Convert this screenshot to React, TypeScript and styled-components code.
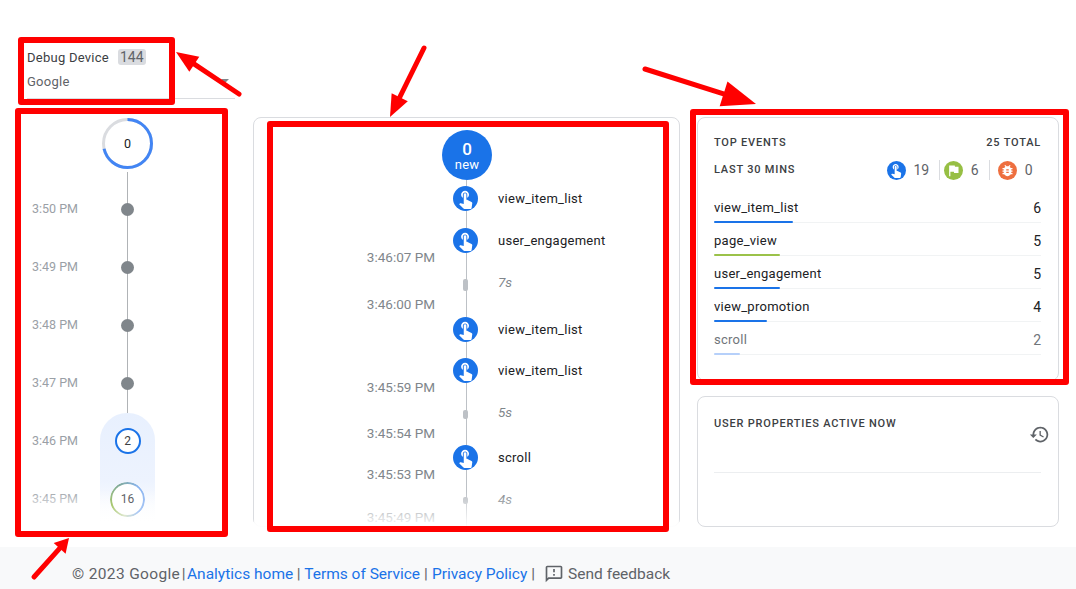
import React from "react";
import styled, { createGlobalStyle } from "styled-components";

const Global = createGlobalStyle`
  html, body { margin: 0; padding: 0; background: #fff; }
  body { font-family: Roboto, "Liberation Sans", sans-serif; color: #202124; }
`;

const Page = styled.div`
  position: relative;
  width: 1076px;
  height: 589px;
  overflow: hidden;
  display: flex;
  flex-direction: column;
`;
const Main = styled.main`
  flex: 1;
  display: flex;
  min-height: 0;
`;
const LeftColumn = styled.section`
  width: 253px;
  flex: none;
  padding-top: 45px;
  box-sizing: border-box;
`;
const Selector = styled.div`
  position: relative;
  width: 208px;
  height: 53px;
  margin: 0 0 19px 27px;
  border-bottom: 1px solid #dadce0;
  display: flex;
  flex-direction: column;
  gap: 0.5px;
`;
const SelectorLine = styled.div<{ $muted?: boolean }>`
  display: flex;
  align-items: center;
  gap: 9px;
  height: 24px;
  font-size: 13px;
  letter-spacing: 0.25px;
  color: ${(p) => (p.$muted ? "#5f6368" : "#3c4043")};
`;
const Badge = styled.span`
  background: #dadce0;
  border-radius: 3px;
  padding: 0 2px;
  font-size: 14px;
  line-height: 16px;
  letter-spacing: 0;
  color: #5f6368;
`;
const Caret = styled.span`
  position: absolute;
  right: 6px;
  top: 34px;
  width: 0;
  height: 0;
  border-left: 4px solid transparent;
  border-right: 4px solid transparent;
  border-top: 4px solid #80868b;
`;
const Rail = styled.div`
  position: relative;
  padding-left: 32px;
  &::before {
    content: "";
    position: absolute;
    left: 127px;
    top: 54px;
    height: 350px;
    width: 1px;
    background: #b0b3b6;
  }
  &::after {
    content: "";
    position: absolute;
    left: 28px;
    width: 130px;
    top: 372px;
    height: 36px;
    background: linear-gradient(to bottom, rgba(255,255,255,0), rgba(255,255,255,0.55) 40%, rgba(255,255,255,1) 90%);
  }
`;
const Pill = styled.div`
  position: absolute;
  left: 100px;
  top: 295px;
  width: 55px;
  height: 112px;
  border-radius: 27px 27px 0 0;
  background: linear-gradient(to bottom, #e8f0fe 0%, #edf3fe 60%, #ffffff 100%);
`;
const Gauge = styled.div`
  position: relative;
  width: 51px;
  height: 51px;
  margin: 0 0 11px 70px;
  display: flex;
  align-items: center;
  justify-content: center;
  font-size: 12.5px;
  background: #fff;
  & > svg { position: absolute; inset: 0; }
`;
const RailRow = styled.div`
  position: relative;
  height: 58px;
  display: grid;
  grid-template-columns: 68px 55px;
  align-items: center;
`;
const RailTime = styled.span`
  font-size: 12.5px;
  padding-bottom: 2px;
  color: #9aa0a6;
`;
const NodeSlot = styled.div`
  display: flex;
  align-items: center;
  justify-content: center;
  z-index: 1;
`;
const Dot = styled.span`
  width: 13px;
  height: 13px;
  border-radius: 50%;
  background: #80868b;
`;
const CountNode = styled.span`
  width: 26px;
  height: 26px;
  box-sizing: border-box;
  border: 2.5px solid #1a73e8;
  border-radius: 50%;
  background: #fff;
  display: flex;
  align-items: center;
  justify-content: center;
  font-size: 12px;
  color: #3c4043;
`;
const RingNode = styled.span`
  position: relative;
  width: 35px;
  height: 35px;
  border-radius: 50%;
  background: #fff;
  display: flex;
  align-items: center;
  justify-content: center;
  font-size: 12px;
  color: #5f6368;
  &::before {
    content: "";
    position: absolute;
    inset: 0;
    border-radius: 50%;
    padding: 2px;
    background: conic-gradient(from 330deg, #7fa99b, #8ab4f0 70deg, #a9c7f5 170deg, #dfe8d0 220deg, #a8c86e 280deg, #7fa99b);
    -webkit-mask: linear-gradient(#000 0 0) content-box, linear-gradient(#000 0 0);
    -webkit-mask-composite: xor;
    mask-composite: exclude;
  }
`;

const CenterCard = styled.section`
  position: relative;
  width: 427px;
  height: 410px;
  margin-top: 117px;
  flex: none;
  box-sizing: border-box;
  border: 1px solid #dadce0;
  border-radius: 8px;
  padding-top: 12px;
`;
const Timeline = styled.div`
  position: relative;
  &::before {
    content: "";
    position: absolute;
    left: 212px;
    top: 50px;
    bottom: 0;
    width: 1px;
    height: 347px;
    background: #bdc1c6;
  }
  &::after {
    content: "";
    position: absolute;
    left: 0;
    right: 0;
    top: 362px;
    height: 36px;
    background: linear-gradient(to bottom, rgba(255,255,255,0), rgba(255,255,255,0.6) 60%, #fff);
  }
`;
const NewBubble = styled.div`
  position: relative;
  width: 50px;
  height: 50px;
  margin: 0 0 6px 188px;
  padding-top: 2px;
  box-sizing: border-box;
  border-radius: 50%;
  background: #1a73e8;
  color: #fff;
  display: flex;
  flex-direction: column;
  align-items: center;
  justify-content: center;
`;
const BubbleCount = styled.span`
  font-size: 17px;
  font-weight: 500;
  line-height: 17px;
`;
const BubbleLabel = styled.span`
  font-size: 13px;
  line-height: 14px;
  letter-spacing: 0.2px;
`;
const TimelineRow = styled.div<{ $height: number; $top?: number }>`
  position: relative;
  height: ${(p) => p.$height}px;
  margin-top: ${(p) => p.$top ?? 0}px;
  display: grid;
  grid-template-columns: 181px 18px 25px 20px 1fr;
  grid-template-areas: "time . axis . name";
`;
const StampTime = styled.span`
  grid-area: time;
  align-self: end;
  text-align: right;
  font-size: 13.5px;
  line-height: 16px;
  color: #80868b;
`;
const EventIcon = styled.span`
  grid-area: axis;
  width: 25px;
  height: 25px;
  border-radius: 50%;
  background: #1a73e8;
  display: flex;
  align-items: center;
  justify-content: center;
`;
const EventName = styled.span`
  grid-area: name;
  font-size: 13px;
  letter-spacing: 0.27px;
  line-height: 25px;
  color: #202124;
`;
const Duration = styled.span<{ $y: number }>`
  grid-area: name;
  align-self: start;
  padding-top: ${(p) => p.$y}px;
  font-size: 13.5px;
  line-height: 16px;
  font-style: italic;
  color: #80868b;
`;
const GapMark = styled.span<{ $y: number; $h: number }>`
  grid-area: axis;
  justify-self: center;
  align-self: start;
  margin-top: ${(p) => p.$y}px;
  width: 5px;
  height: ${(p) => p.$h}px;
  border-radius: 2px;
  background: #bdc1c6;
  position: relative;
`;

const RightColumn = styled.section`
  margin: 117px 0 0 17px;
  width: 362px;
  flex: none;
  display: flex;
  flex-direction: column;
  gap: 15px;
`;
const Card = styled.div<{ $height: number }>`
  height: ${(p) => p.$height}px;
  box-sizing: border-box;
  border: 1px solid #dadce0;
  border-radius: 8px;
  padding: 0 17px 0 16px;
`;
const HeaderRow = styled.div<{ $height: number; $pad?: number }>`
  display: flex;
  align-items: ${(p) => (p.$pad ? "flex-start" : "center")};
  justify-content: space-between;
  box-sizing: border-box;
  padding-top: ${(p) => p.$pad ?? 0}px;
  height: ${(p) => p.$height}px;
`;
const Caps = styled.span`
  font-size: 11px;
  font-weight: 500;
  line-height: 16px;
  letter-spacing: 0.8px;
  color: #3c4043;
  text-transform: uppercase;
`;
const Totals = styled.div`
  display: flex;
  align-items: center;
  margin-right: 8.5px;
`;
const TotalItem = styled.div<{ $inset?: number }>`
  display: flex;
  align-items: center;
  gap: 8px;
  height: 20px;
  font-size: 14px;
  color: #5f6368;
  ${(p) => (p.$inset ? `padding-left: ${p.$inset}px; border-left: 1px solid #dadce0;` : "")}
`;
const TotalCount = styled.span<{ $gapRight: number }>`
  margin-right: ${(p) => p.$gapRight}px;
`;
const TypeBadge = styled.span<{ $color: string }>`
  width: 19px;
  height: 19px;
  border-radius: 50%;
  background: ${(p) => p.$color};
  display: flex;
  align-items: center;
  justify-content: center;
`;
const EventList = styled.ul`
  list-style: none;
  margin: 0.5px 0 0;
  padding: 0;
`;
const EventItem = styled.li<{ $faded?: boolean }>`
  position: relative;
  height: 33.2px;
  box-sizing: border-box;
  border-bottom: 1px solid #f1f3f4;
  display: flex;
  align-items: flex-start;
  justify-content: space-between;
  font-size: 13px;
  letter-spacing: 0.27px;
  line-height: 24px;
  padding-top: 6px;
  color: ${(p) => (p.$faded ? "#70757a" : "#202124")};
`;
const Bar = styled.span<{ $color: string }>`
  position: absolute;
  left: 0;
  bottom: -1px;
  height: 2px;
  background: ${(p) => p.$color};
  border-radius: 1px;
`;
const Value = styled.span`
  font-size: 14px;
  letter-spacing: 0;
`;
const PropsDivider = styled.div`
  height: 1px;
  background: #eceef0;
`;
const HistoryBtn = styled.span`
  display: flex;
  margin: 8px -9px 0 0;
`;

const Footer = styled.footer`
  height: 42px;
  flex: none;
  background: #f8f9fa;
  padding: 11px 0 0 72px;
  box-sizing: border-box;
  display: flex;
  align-items: center;
  font-size: 15.5px;
  color: #5f6368;
  white-space: pre;
`;
const Copyright = styled.span`
  letter-spacing: 0.35px;
`;
const Separator = styled.span<{ $space: number }>`
  margin: 0 ${(p) => p.$space}px;
`;
const FooterLink = styled.a`
  color: #1a73e8;
  text-decoration: none;
`;
const Feedback = styled.span`
  display: inline-flex;
  align-items: center;
  gap: 4px;
  margin-left: 5px;
`;

const Highlight = styled.div<{ $x: number; $y: number; $w: number; $h: number }>`
  position: absolute;
  left: ${(p) => p.$x}px;
  top: ${(p) => p.$y}px;
  width: ${(p) => p.$w}px;
  height: ${(p) => p.$h}px;
  box-sizing: border-box;
  border: 6px solid #ff0000;
  border-radius: 3px;
  pointer-events: none;
`;
const ArrowLayer = styled.svg`
  position: absolute;
  inset: 0;
  pointer-events: none;
`;

const HAND = "M9 11.24V7.5C9 6.12 10.12 5 11.5 5S14 6.12 14 7.5v3.74c1.21-.81 2-2.18 2-3.74C16 5.01 13.99 3 11.5 3S7 5.01 7 7.5c0 1.56.79 2.93 2 3.74zm9.84 4.63l-4.54-2.26c-.17-.07-.35-.11-.54-.11H13v-6c0-.83-.67-1.5-1.5-1.5S10 6.67 10 7.5v10.74l-3.43-.72c-.08-.01-.15-.03-.24-.03-.31 0-.59.13-.79.33l-.79.8 4.94 4.94c.27.27.65.44 1.06.44h6.79c.75 0 1.33-.55 1.44-1.28l.75-5.27c.01-.07.02-.14.02-.2 0-.62-.38-1.16-.91-1.38z";
const FLAG = "M14.4 6L14 4H5v17h2v-7h5.6l.4 2h7V6z";
const BUG = "M20 8h-2.81c-.45-.78-1.07-1.45-1.82-1.96L17 4.41 15.59 3l-2.17 2.17C12.96 5.06 12.49 5 12 5c-.49 0-.96.06-1.41.17L8.41 3 7 4.41l1.62 1.63C7.88 6.55 7.26 7.22 6.81 8H4v2h2.09c-.05.33-.09.66-.09 1v1H4v2h2v1c0 .34.04.67.09 1H4v2h2.81c1.04 1.79 2.97 3 5.19 3s4.15-1.21 5.19-3H20v-2h-2.09c.05-.33.09-.66.09-1v-1h2v-2h-2v-1c0-.34-.04-.67-.09-1H20V8zm-6 8h-4v-2h4v2zm0-4h-4v-2h4v2z";
const HISTORY = "M13 3c-4.97 0-9 4.03-9 9H1l3.89 3.89.07.14L9 12H6c0-3.87 3.13-7 7-7s7 3.13 7 7-3.13 7-7 7c-1.93 0-3.68-.79-4.94-2.06l-1.42 1.42C8.27 19.99 10.51 21 13 21c4.97 0 9-4.03 9-9s-4.03-9-9-9zm-1 5v5l4.28 2.54.72-1.21-3.5-2.08V8H12z";
const FEEDBACK = "M20 2H4c-1.1 0-2 .9-2 2v18l4-4h14c1.1 0 2-.9 2-2V4c0-1.1-.9-2-2-2zm0 14H5.17L4 17.17V4h16v12zM11 12h2v2h-2zm0-6h2v4h-2z";

const Glyph = ({ d, size, color }: { d: string; size: number; color: string }) => (
  <svg width={size} height={size} viewBox="0 0 24 24" fill={color} aria-hidden="true">
    <path d={d} />
  </svg>
);

const Hand = () => <Glyph d={HAND} size={21} color="#fff" />;

const railTimes = ["3:50 PM", "3:49 PM", "3:48 PM", "3:47 PM"];
const topEvents = [
  { name: "view_item_list", count: 6, width: 78.5, color: "#1a73e8" },
  { name: "page_view", count: 5, width: 65.5, color: "#9bc24a" },
  { name: "user_engagement", count: 5, width: 65.5, color: "#1a73e8" },
  { name: "view_promotion", count: 4, width: 52.5, color: "#1a73e8" },
  { name: "scroll", count: 2, width: 26, color: "#b6d0fa", faded: true },
];

const Arrow = ({ x1, y1, x2, y2, head = 22, spread = 9 }: { x1: number; y1: number; x2: number; y2: number; head?: number; spread?: number }) => {
  const len = Math.hypot(x2 - x1, y2 - y1);
  const ux = (x2 - x1) / len;
  const uy = (y2 - y1) / len;
  const bx = x2 - ux * head;
  const by = y2 - uy * head;
  return (
    <g>
      <line x1={x1} y1={y1} x2={bx} y2={by} stroke="#ff0000" strokeWidth={5} strokeLinecap="round" />
      <polygon
        fill="#ff0000"
        points={`${x2},${y2} ${bx - uy * spread},${by + ux * spread} ${bx + uy * spread},${by - ux * spread}`}
      />
    </g>
  );
};

export default function App() {
  return (
    <Page>
      <Global />
      <Main>
        <LeftColumn>
          <Selector>
            <SelectorLine>
              Debug Device <Badge>144</Badge>
            </SelectorLine>
            <SelectorLine $muted>Google</SelectorLine>
            <Caret />
          </Selector>
          <Rail>
            <Pill />
            <Gauge>
              <svg width="51" height="51" viewBox="0 0 51 51" aria-hidden="true">
                <circle cx="25.5" cy="25.5" r="24" fill="none" stroke="#dadce0" strokeWidth="3" />
                <circle
                  cx="25.5"
                  cy="25.5"
                  r="24"
                  fill="none"
                  stroke="#4285f4"
                  strokeWidth="3"
                  strokeDasharray="107 151"
                  transform="rotate(-90 25.5 25.5)"
                />
              </svg>
              0
            </Gauge>
            {railTimes.map((t) => (
              <RailRow key={t}>
                <RailTime>{t}</RailTime>
                <NodeSlot>
                  <Dot />
                </NodeSlot>
              </RailRow>
            ))}
            <RailRow>
              <RailTime>3:46 PM</RailTime>
              <NodeSlot>
                <CountNode>2</CountNode>
              </NodeSlot>
            </RailRow>
            <RailRow>
              <RailTime>3:45 PM</RailTime>
              <NodeSlot>
                <RingNode>16</RingNode>
              </NodeSlot>
            </RailRow>
          </Rail>
        </LeftColumn>

        <CenterCard>
          <Timeline>
            <NewBubble>
              <BubbleCount>0</BubbleCount>
              <BubbleLabel>new</BubbleLabel>
            </NewBubble>
            <TimelineRow $height={25}>
              <EventIcon><Hand /></EventIcon>
              <EventName>view_item_list</EventName>
            </TimelineRow>
            <TimelineRow $height={37} $top={17}>
              <StampTime>3:46:07 PM</StampTime>
              <EventIcon><Hand /></EventIcon>
              <EventName>user_engagement</EventName>
            </TimelineRow>
            <TimelineRow $height={31}>
              <GapMark $y={14} $h={12} />
              <Duration $y={9}>7s</Duration>
            </TimelineRow>
            <TimelineRow $height={16}>
              <StampTime>3:46:00 PM</StampTime>
            </TimelineRow>
            <TimelineRow $height={25} $top={5}>
              <EventIcon><Hand /></EventIcon>
              <EventName>view_item_list</EventName>
            </TimelineRow>
            <TimelineRow $height={37} $top={16}>
              <StampTime>3:45:59 PM</StampTime>
              <EventIcon><Hand /></EventIcon>
              <EventName>view_item_list</EventName>
            </TimelineRow>
            <TimelineRow $height={30}>
              <GapMark $y={15} $h={9} />
              <Duration $y={9}>5s</Duration>
            </TimelineRow>
            <TimelineRow $height={16}>
              <StampTime>3:45:54 PM</StampTime>
            </TimelineRow>
            <TimelineRow $height={37} $top={4}>
              <StampTime>3:45:53 PM</StampTime>
              <EventIcon><Hand /></EventIcon>
              <EventName>scroll</EventName>
            </TimelineRow>
            <TimelineRow $height={27}>
              <GapMark $y={15} $h={7} />
              <Duration $y={9}>4s</Duration>
            </TimelineRow>
            <TimelineRow $height={16}>
              <StampTime>3:45:49 PM</StampTime>
            </TimelineRow>
          </Timeline>
        </CenterCard>

        <RightColumn>
          <Card $height={264}>
            <HeaderRow $height={33} $pad={17}>
              <Caps>Top Events</Caps>
              <Caps>25 Total</Caps>
            </HeaderRow>
            <HeaderRow $height={38}>
              <Caps>Last 30 mins</Caps>
              <Totals>
                <TotalItem>
                  <TypeBadge $color="#1a73e8"><Glyph d={HAND} size={16} color="#fff" /></TypeBadge>
                  <TotalCount $gapRight={9.5}>19</TotalCount>
                </TotalItem>
                <TotalItem $inset={4}>
                  <TypeBadge $color="#97bf44"><Glyph d={FLAG} size={15} color="#fff" /></TypeBadge>
                  <TotalCount $gapRight={10}>6</TotalCount>
                </TotalItem>
                <TotalItem $inset={8}>
                  <TypeBadge $color="#ee6f3f"><Glyph d={BUG} size={15} color="#fff" /></TypeBadge>
                  <TotalCount $gapRight={0}>0</TotalCount>
                </TotalItem>
              </Totals>
            </HeaderRow>
            <EventList>
              {topEvents.map((e) => (
                <EventItem key={e.name} $faded={e.faded}>
                  <span>{e.name}</span>
                  <Value>{e.count}</Value>
                  <Bar $color={e.color} style={{ width: e.width }} />
                </EventItem>
              ))}
            </EventList>
          </Card>
          <Card $height={131}>
            <HeaderRow $height={75} $pad={19}>
              <Caps>User properties active now</Caps>
              <HistoryBtn><Glyph d={HISTORY} size={21} color="#5f6368" /></HistoryBtn>
            </HeaderRow>
            <PropsDivider />
          </Card>
        </RightColumn>
      </Main>

      <Footer>
        <Copyright>© 2023 Google</Copyright>
        <Separator $space={1.5}>|</Separator>
        <FooterLink href="#">Analytics home</FooterLink>
        <Separator $space={3.6}>|</Separator>
        <FooterLink href="#">Terms of Service</FooterLink>
        <Separator $space={4}>|</Separator>
        <FooterLink href="#">Privacy Policy</FooterLink>
        <Separator $space={4}>|</Separator>
        <Feedback>
          <Glyph d={FEEDBACK} size={20} color="#5f6368" />
          Send feedback
        </Feedback>
      </Footer>

      <Highlight $x={18} $y={37} $w={157} $h={68} />
      <Highlight $x={15} $y={108} $w={213} $h={429} />
      <Highlight $x={267} $y={121} $w={402} $h={411} />
      <Highlight $x={690} $y={109} $w={379} $h={276} />
      <ArrowLayer width="1076" height="589" viewBox="0 0 1076 589" aria-hidden="true">
        <Arrow x1={239} y1={94} x2={176} y2={52} />
        <Arrow x1={424} y1={48} x2={390} y2={117} />
        <Arrow x1={645} y1={69} x2={756} y2={104} head={34} spread={13} />
        <Arrow x1={34} y1={577} x2={69} y2={538} head={14} spread={8} />
      </ArrowLayer>
    </Page>
  );
}
